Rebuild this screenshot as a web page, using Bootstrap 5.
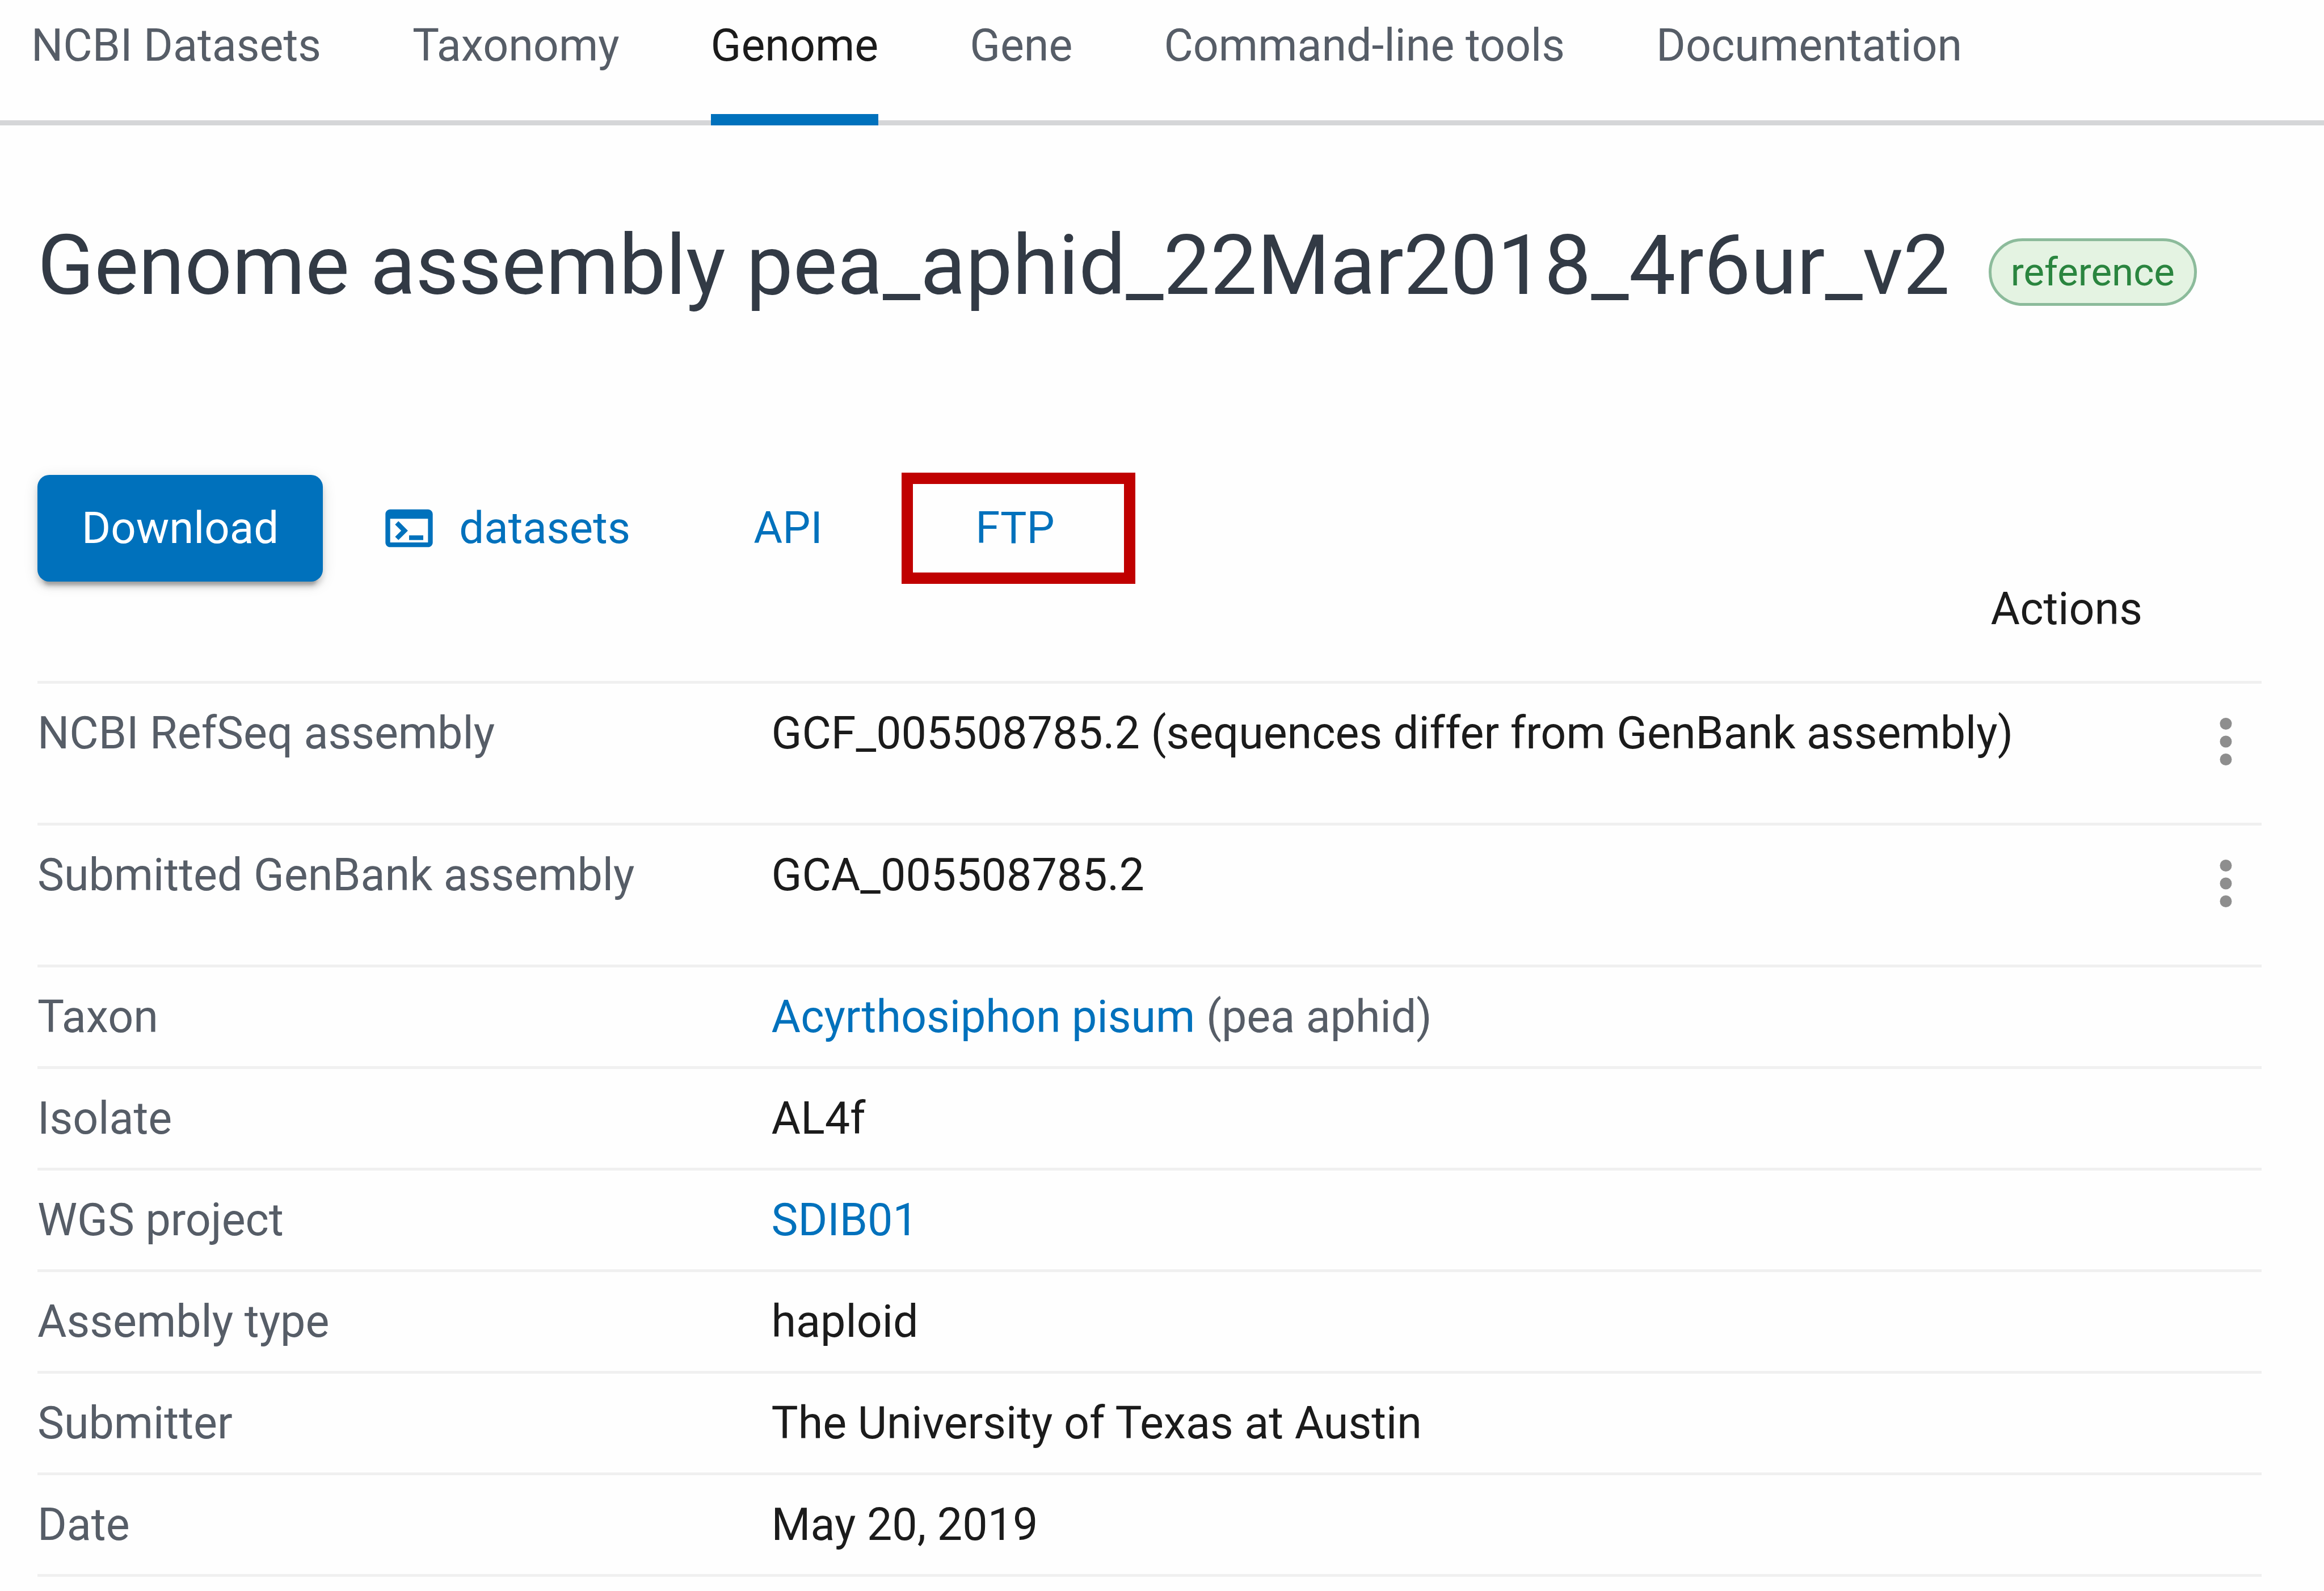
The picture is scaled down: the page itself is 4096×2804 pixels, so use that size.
<!DOCTYPE html>
<html lang="en">
<head>
<meta charset="utf-8">
<meta name="viewport" content="width=device-width, initial-scale=1">
<title>Genome assembly pea_aphid_22Mar2018_4r6ur_v2</title>
<link href="https://cdn.jsdelivr.net/npm/bootstrap@5.3.0/dist/css/bootstrap.min.css" rel="stylesheet">
<style>
  :root { --ink: #1b1b1b; --muted: #565d67; --brand: #0071bc; --rule: #f0f0f0; }
  body { font-family: Roboto, "Liberation Sans", sans-serif; font-size: 79px; line-height: 120px; color: var(--ink); background: #fefefe; }
  a { color: var(--brand); }
  .site-nav { padding: 20px 55px 0; gap: 161px; border-bottom: 9px solid #d5d6d8; }
  .site-nav .nav-link { padding: 0 0 61px; margin-bottom: -9px; color: var(--muted); border-bottom: 20px solid transparent; }
  .site-nav .nav-link.active { color: var(--ink); border-bottom-color: var(--brand); }
  .page-body { padding: 157px 110px 0 66px; }
  .page-title { font-size: 147px; line-height: 180px; font-weight: 400; color: #323a45; }
  .title-row { gap: 68px; margin-bottom: 275px; }
  .ref-chip { font-size: 69px; line-height: 109px; padding: 0 34px; margin-bottom: 19px; border: 5px solid #8cbb9b; background: #e4f3e2; color: #2a853f; }
  .act-row { gap: 24px; }
  .act { font-size: 78px; line-height: 108px; padding: 40px 78px; border: 0; border-radius: 21px; }
  .act-main, .act-main:hover { background: var(--brand); color: #fff; box-shadow: 0 16px 5px -10px rgba(0,0,0,.2), 0 10px 10px rgba(0,0,0,.14), 0 5px 26px rgba(0,0,0,.12); }
  .act-text { min-width: 352px; color: var(--brand); gap: 38px; }
  .act-text svg { width: 100px; height: 100px; }
  .highlight-box { padding: 0 16px 0 4px; border: 20px solid #c00000; }
  .highlight-box .act { padding-top: 24px; padding-bottom: 24px; }
  .facts { --bs-table-bg: transparent; }
  .facts th, .facts td { font-weight: 400; color: var(--ink); padding: 27px 0; border-bottom: 5px solid var(--rule); vertical-align: top; }
  .facts tbody th { width: 33%; color: var(--muted); }
  .facts thead th { line-height: 88px; padding: 0 210px 83px 0; }
  .facts .tall { height: 250px; }
  .facts .paren { color: var(--muted); }
  .menu-btn { padding: 12px 0; border: 0; line-height: 0; color: #8e8e8e; }
  .menu-btn svg { width: 126px; height: 126px; }
  .facts td.menu-cell { padding-bottom: 0; }
</style>
<script src="https://cdn.jsdelivr.net/npm/bootstrap@5.3.0/dist/js/bootstrap.bundle.min.js"></script>
</head>
<body>
<nav aria-label="Datasets">
  <ul class="nav site-nav flex-nowrap">
    <li class="nav-item"><a class="nav-link" href="#">NCBI Datasets</a></li>
    <li class="nav-item"><a class="nav-link" href="#">Taxonomy</a></li>
    <li class="nav-item"><a class="nav-link active" aria-current="page" href="#">Genome</a></li>
    <li class="nav-item"><a class="nav-link" href="#">Gene</a></li>
    <li class="nav-item"><a class="nav-link" href="#">Command-line tools</a></li>
    <li class="nav-item"><a class="nav-link" href="#">Documentation</a></li>
  </ul>
</nav>
<main class="page-body">
  <div class="title-row d-flex align-items-end">
    <h1 class="page-title m-0">Genome assembly pea_aphid_22Mar2018_4r6ur_v2</h1>
    <span class="ref-chip rounded-pill">reference</span>
  </div>
  <div class="act-row d-flex align-items-center">
    <button type="button" class="btn act act-main">Download</button>
    <button type="button" class="btn act act-text d-flex align-items-center">
      <svg viewBox="0 0 24 24" fill="currentColor" aria-hidden="true"><path d="M20 4H4c-1.11 0-2 .9-2 2v12c0 1.1.89 2 2 2h16c1.1 0 2-.9 2-2V6c0-1.1-.89-2-2-2zm0 14H4V8h16v10zm-2-1h-6v-2h6v2zM7.500 17l-1.410-1.410L8.670 13l-2.590-2.590L7.500 9l4 4-4 4z"/></svg>
      datasets
    </button>
    <button type="button" class="btn act act-text">API</button>
    <div class="highlight-box"><button type="button" class="btn act act-text d-block">FTP</button></div>
  </div>
  <table class="table facts mb-0">
    <thead>
      <tr><th colspan="3" class="text-end" scope="col">Actions</th></tr>
    </thead>
    <tbody>
      <tr class="tall">
        <th scope="row">NCBI RefSeq assembly</th>
        <td>GCF_005508785.2 (sequences differ from GenBank assembly)</td>
        <td class="menu-cell text-end"><button type="button" class="btn menu-btn" aria-label="RefSeq actions"><svg viewBox="0 0 24 24" fill="currentColor" aria-hidden="true"><circle cx="12" cy="6" r="2"/><circle cx="12" cy="12" r="2"/><circle cx="12" cy="18" r="2"/></svg></button></td>
      </tr>
      <tr class="tall">
        <th scope="row">Submitted GenBank assembly</th>
        <td>GCA_005508785.2</td>
        <td class="menu-cell text-end"><button type="button" class="btn menu-btn" aria-label="GenBank actions"><svg viewBox="0 0 24 24" fill="currentColor" aria-hidden="true"><circle cx="12" cy="6" r="2"/><circle cx="12" cy="12" r="2"/><circle cx="12" cy="18" r="2"/></svg></button></td>
      </tr>
      <tr><th scope="row">Taxon</th><td colspan="2"><a class="text-decoration-none" href="#">Acyrthosiphon pisum</a> <span class="paren">(pea aphid)</span></td></tr>
      <tr><th scope="row">Isolate</th><td colspan="2">AL4f</td></tr>
      <tr><th scope="row">WGS project</th><td colspan="2"><a class="text-decoration-none" href="#">SDIB01</a></td></tr>
      <tr><th scope="row">Assembly type</th><td colspan="2">haploid</td></tr>
      <tr><th scope="row">Submitter</th><td colspan="2">The University of Texas at Austin</td></tr>
      <tr><th scope="row">Date</th><td colspan="2">May 20, 2019</td></tr>
    </tbody>
  </table>
</main>
</body>
</html>
